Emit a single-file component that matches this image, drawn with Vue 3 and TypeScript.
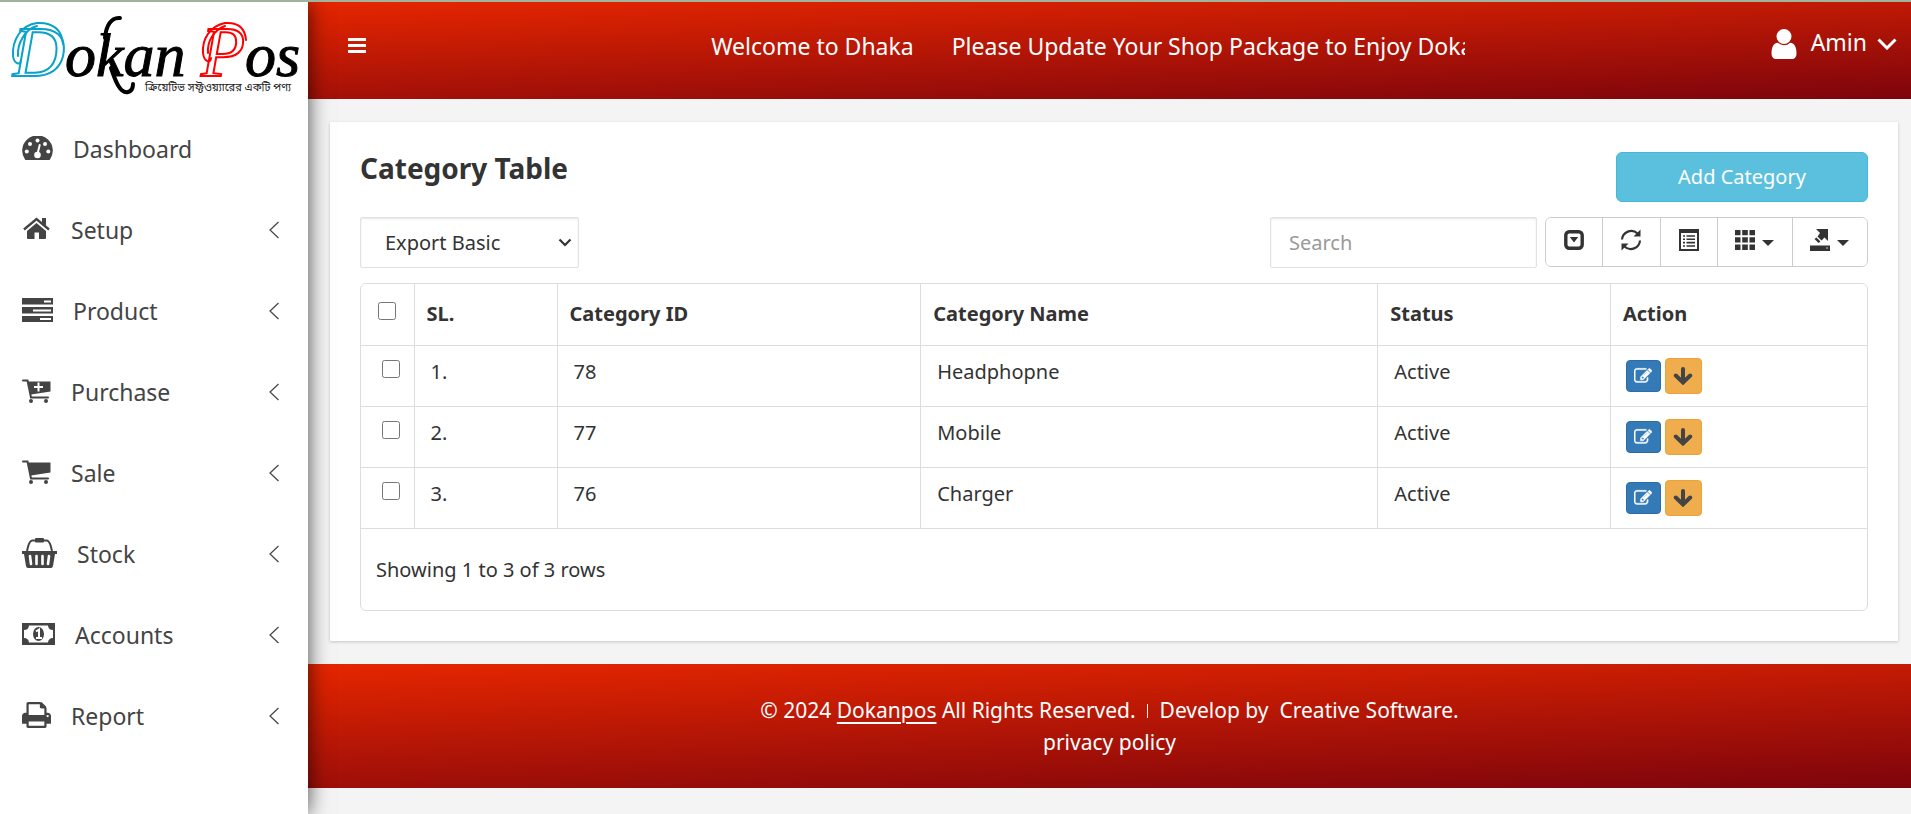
<script setup lang="ts">
import { ref } from 'vue'

interface MenuItem {
  label: string
  icon: string
  width: number
  height: number
  expandable: boolean
}

interface Category {
  id: number
  name: string
  status: string
}

const menu: MenuItem[] = [
  { label: 'Dashboard', icon: 'gauge', width: 31, height: 24, expandable: false },
  { label: 'Setup', icon: 'home', width: 29, height: 24, expandable: true },
  { label: 'Product', icon: 'tasks', width: 31, height: 24, expandable: true },
  { label: 'Purchase', icon: 'cart-plus', width: 29, height: 24, expandable: true },
  { label: 'Sale', icon: 'cart', width: 29, height: 24, expandable: true },
  { label: 'Stock', icon: 'basket', width: 35, height: 30, expandable: true },
  { label: 'Accounts', icon: 'money', width: 33, height: 22, expandable: true },
  { label: 'Report', icon: 'print', width: 29, height: 26, expandable: true },
]

const rows = ref<Category[]>([
  { id: 78, name: 'Headphopne', status: 'Active' },
  { id: 77, name: 'Mobile', status: 'Active' },
  { id: 76, name: 'Charger', status: 'Active' },
])

const selected = ref<number[]>([])
const query = ref('')
const exportMode = ref('basic')

function toggleAll(event: Event) {
  const on = (event.target as HTMLInputElement).checked
  selected.value = on ? rows.value.map((r) => r.id) : []
}
</script>

<template>
  <div class="page">
    <aside class="sidebar">
      <a class="logo" href="#" aria-label="Dokan Pos">
        <svg width="308" height="100" viewBox="0 0 308 100">
          <text x="13" y="74" class="word"><tspan class="cap blue">D</tspan><tspan>okan </tspan><tspan class="cap red">P</tspan><tspan>os</tspan></text>
          <g fill="none" stroke-linecap="round">
            <path d="M37 21C21 23 12 38 13 54C14 62 21 64 21 58M37 24C25 27 17 42 18 54" stroke="#0aa2cc" stroke-width="2" />
            <path d="M37 21C53 20 62 28 63 42" stroke="#0aa2cc" stroke-width="2" />
            <path d="M225 21C210 24 202 37 203 51C204 60 211 62 211 56M225 24C214 28 207 39 208 51" stroke="#f00" stroke-width="2" />
            <path d="M225 21C238 20 245 26 246 38" stroke="#f00" stroke-width="2" />
            <path d="M105 36C106 24 111 15 120 16" stroke="#000" stroke-width="4" />
            <path d="M111 66C115 78 120 92 128 90C132 89 133 86 133 82" stroke="#000" stroke-width="4" />
          </g>
          <text x="145" y="89" class="tagline">ক্রিয়েটিভ সফ্টওয়্যারের একটি পণ্য</text>
        </svg>
      </a>
      <nav class="menu">
        <a v-for="item in menu" :key="item.label" class="menu-item" href="#">
          <svg class="menu-icon" :width="item.width" :height="item.height" :viewBox="`0 0 ${item.width} ${item.height}`">
            <template v-if="item.icon === 'gauge'">
              <path d="M3 23.5A15.3 15.3 0 1 1 28 23.5Q27.500 24 27 24H4Q3.500 24 3 23.500Z" />
              <g fill="#fff">
                <circle cx="4.800" cy="15.500" r="2" /><circle cx="8" cy="8" r="2" /><circle cx="15.500" cy="4.600" r="2" />
                <circle cx="23" cy="8" r="2" /><circle cx="26.300" cy="15.500" r="2" /><circle cx="15.500" cy="19" r="3.300" />
              </g>
              <path d="M15.500 18L17.700 9" stroke="#fff" stroke-width="2" stroke-linecap="round" />
            </template>
            <template v-else-if="item.icon === 'home'">
              <path d="M5 14L14.500 6L24 14V21Q24 22 23 22H17V15.500H12.500V22H6Q5 22 5 21Z" />
              <path d="M2 12.500L14.500 2L27 12.500" fill="none" stroke="#444" stroke-width="2.400" />
              <path d="M20 1H24V9L20 6Z" />
            </template>
            <template v-else-if="item.icon === 'tasks'">
              <path d="M0 0H31V6.500H0ZM0 9H31V15.500H0ZM0 18H31V24H0Z" />
              <path d="M22 2.500H29V4.500H22ZM11 11.500H29V13.500H11ZM18 20H29V22H18Z" fill="#fff" />
            </template>
            <template v-else-if="item.icon === 'cart' || item.icon === 'cart-plus'">
              <path d="M1 1.500H5.500L9 18.500H26" fill="none" stroke="#444" stroke-width="2" stroke-linecap="round" />
              <path d="M6 2.500H28.500V12.500L9 15.500Z" />
              <circle cx="9" cy="22" r="2" /><circle cx="24" cy="22" r="2" />
              <path v-if="item.icon === 'cart-plus'" d="M12 8H21M16.500 3.500V12.500" stroke="#fff" stroke-width="2" />
            </template>
            <template v-else-if="item.icon === 'basket'">
              <path d="M0 13H35V16H33L31 28Q30.700 30 29 30H6Q4.300 30 4 28L2 16H0Z" />
              <path d="M5 13Q7 3 10 2.500H25Q28 3 30 13" fill="none" stroke="#444" stroke-width="2" />
              <rect x="13" y="0" width="9" height="4.500" rx="1" />
              <path d="M8 18L9 26M14.500 18V26M20.500 18V26M27 18L26 26" stroke="#fff" stroke-width="2.600" stroke-linecap="round" />
            </template>
            <template v-else-if="item.icon === 'money'">
              <path fill-rule="evenodd" d="M0 0H33V22H0ZM7 2.500A5 5 0 0 1 2 7V15A5 5 0 0 1 7 19.500H26A5 5 0 0 1 31 15V7A5 5 0 0 1 26 2.500Z" />
              <ellipse cx="16.500" cy="11" rx="5.500" ry="7" />
              <path d="M14 8.500L17 6.500V15M14 15H20" fill="none" stroke="#fff" stroke-width="2" />
            </template>
            <g v-else transform="scale(.01743 .01693) translate(-64 -128)">
              <path d="M448 1536h896v-256h-896v256zm0-640h896v-384h-160q-40 0-68-28t-28-68v-160h-640v640zm1152 64q0-26-19-45t-45-19-45 19-19 45 19 45 45 19 45-19 19-45zm128 0v416q0 13-9.500 22.500t-22.500 9.500h-224v160q0 40-28 68t-68 28h-960q-40 0-68-28t-28-68v-160h-224q-13 0-22.500-9.500t-9.500-22.500v-416q0-79 56.500-135.500t135.500-56.500h64v-544q0-40 28-68t68-28h672q40 0 88 20t76 48l152 152q28 28 48 76t20 88v256h64q79 0 135.500 56.500t56.500 135.500z" />
            </g>
          </svg>
          <span class="menu-label">{{ item.label }}</span>
          <svg v-if="item.expandable" class="menu-arrow" width="10" height="18" viewBox="0 0 10 18">
            <path d="M9.500 1L1 9L9.500 17" fill="none" stroke="#444" stroke-width="1.200" />
          </svg>
        </a>
      </nav>
    </aside>

    <div class="main">
      <header class="topbar">
        <button class="toggle" type="button" aria-label="Toggle menu">
          <svg width="18" height="16" viewBox="0 0 18 16"><path d="M0 0H18V3H0ZM0 6H18V9H0ZM0 12H18V15H0Z" fill="#fff" /></svg>
        </button>
        <div class="ticker">
          <span>Welcome to Dhaka</span>
          <span>Please Update Your Shop Package to Enjoy Dokanpos</span>
        </div>
        <button class="user" type="button">
          <svg class="user-icon" width="26" height="30" viewBox="256 128 1280 1536">
            <path fill="#fff" d="M1536 1399q0 109-62.500 187t-150.500 78h-854q-88 0-150.500-78t-62.500-187q0-85 8.500-160.500t31.500-152 58.500-131 94-89 134.500-34.500q131 128 313 128t313-128q76 0 134.500 34.500t94 89 58.500 131 31.500 152 8.500 160.500zm-256-887q0 159-112.500 271.500t-271.500 112.500-271.500-112.500-112.500-271.500 112.500-271.500 271.500-112.500 271.500 112.500 112.500 271.500z" />
          </svg>
          <span class="user-name">Amin</span>
          <svg width="20" height="12" viewBox="0 0 20 12"><path d="M1.500 1.500L10 10L18.500 1.500" fill="none" stroke="#fff" stroke-width="3" /></svg>
        </button>
      </header>

      <main class="card">
        <div class="card-head">
          <h1>Category Table</h1>
          <button class="add" type="button">Add Category</button>
        </div>

        <div class="tools">
          <div class="select-box">
            <select v-model="exportMode" aria-label="Export mode">
              <option value="basic">Export Basic</option>
              <option value="all">Export All</option>
              <option value="selected">Export Selected</option>
            </select>
            <svg width="14" height="9" viewBox="0 0 14 9"><path d="M1.500 1.500L7 7L12.500 1.500" fill="none" stroke="#333" stroke-width="2.200" /></svg>
          </div>
          <input v-model="query" class="search" type="text" placeholder="Search" aria-label="Search" />
          <div class="group">
            <button type="button" aria-label="Toggle pagination">
              <svg width="20" height="20" viewBox="0 0 20 20">
                <rect x="1.800" y="1.800" width="16.400" height="16.400" rx="3.500" fill="none" stroke="#333" stroke-width="3.400" />
                <path d="M5.800 7H14.200L10 12.500Z" fill="#333" />
              </svg>
            </button>
            <button type="button" aria-label="Refresh">
              <svg width="22" height="22" viewBox="0 0 22 22">
                <g fill="none" stroke="#333" stroke-width="2.200"><path d="M2 10.500A9.200 9.200 0 0 1 17.500 4.500" /><path d="M20 11.500A9.200 9.200 0 0 1 4.500 17.500" /></g>
                <path d="M20.500 0.500V7.500H13.500ZM1.500 21.500V14.500H8.500Z" fill="#333" />
              </svg>
            </button>
            <button type="button" aria-label="Toggle view">
              <svg width="20" height="22" viewBox="0 0 20 22">
                <path fill-rule="evenodd" fill="#333" d="M0 0H20V22H0ZM2 4V20H18V4Z" />
                <path d="M4 7H6M7.500 7H16M4 10.300H6M7.500 10.300H16M4 13.600H6M7.500 13.600H16M4 17H6M7.500 17H16" stroke="#333" stroke-width="1.600" />
              </svg>
            </button>
            <button type="button" class="wide" aria-label="Columns">
              <svg width="20" height="20" viewBox="0 0 20 20">
                <path fill="#333" d="M0 0H5.500V5.300H0ZM7.200 0H12.800V5.300H7.200ZM14.500 0H20V5.300H14.500ZM0 7.300H5.500V12.600H0ZM7.200 7.300H12.800V12.600H7.200ZM14.500 7.300H20V12.600H14.500ZM0 14.600H5.500V20H0ZM7.200 14.600H12.800V20H7.200ZM14.500 14.600H20V20H14.500Z" />
              </svg>
              <i class="caret"></i>
            </button>
            <button type="button" class="wide" aria-label="Export">
              <svg width="20" height="22" viewBox="0 0 20 22">
                <path fill="#333" d="M0 16.500H20V22H0ZM6 0H18V12L14.500 8.500L11.500 11.500L7.500 7.500L10 4ZM6.500 8.500L10.500 12.500L8.500 14L4.500 10Z" />
                <circle cx="17" cy="19" r="1" fill="#999" />
              </svg>
              <i class="caret"></i>
            </button>
          </div>
        </div>

        <div class="table-box">
          <table>
            <colgroup>
              <col class="c-check" /><col class="c-sl" /><col class="c-id" /><col class="c-name" /><col class="c-status" /><col />
            </colgroup>
            <thead>
              <tr>
                <th class="check"><input type="checkbox" aria-label="Select all" :checked="selected.length === rows.length" @change="toggleAll" /></th>
                <th>SL.</th>
                <th>Category ID</th>
                <th>Category Name</th>
                <th>Status</th>
                <th>Action</th>
              </tr>
            </thead>
            <tbody>
              <tr v-for="(row, i) in rows" :key="row.id">
                <td class="check"><input v-model="selected" type="checkbox" :value="row.id" :aria-label="`Select ${row.name}`" /></td>
                <td>{{ i + 1 }}.</td>
                <td>{{ row.id }}</td>
                <td>{{ row.name }}</td>
                <td>{{ row.status }}</td>
                <td class="action">
                  <div class="actions">
                    <button class="edit" type="button" :aria-label="`Edit ${row.name}`">
                      <svg width="18" height="18" viewBox="0 0 1792 1792">
                        <path fill="#fff" stroke="#fff" stroke-width="40" d="M888 1184l116-116-152-152-116 116v56h96v96h56zm440-720q-16-16-33 1l-350 350q-17 17-1 33t33-1l350-350q17-17 1-33zm80 594v190q0 119-84.500 203.500t-203.500 84.500h-832q-119 0-203.500-84.500t-84.500-203.500v-832q0-119 84.500-203.500t203.500-84.500h832q63 0 117 25 15 7 18 23 3 17-9 29l-49 49q-14 14-32 8-23-6-45-6h-832q-66 0-113 47t-47 113v832q0 66 47 113t113 47h832q66 0 113-47t47-113v-126q0-13 9-22l64-64q15-15 35-7t20 29zm-96-738l288 288-672 672h-288v-288zm444 132l-92 92-288-288 92-92q28-28 68-28t68 28l152 152q28 28 28 68t-28 68z" />
                      </svg>
                    </button>
                    <button class="lower" type="button" :aria-label="`Deactivate ${row.name}`">
                      <svg width="20" height="18" viewBox="0 0 20 18"><path d="M10 2V14M2.800 8.500L10 15.500L17.200 8.500" fill="none" stroke="#444" stroke-width="4" stroke-linecap="round" /></svg>
                    </button>
                  </div>
                </td>
              </tr>
            </tbody>
          </table>
          <p class="summary">Showing 1 to {{ rows.length }} of {{ rows.length }} rows</p>
        </div>
      </main>

      <footer class="footer">
        <p>© 2024 <a class="brand" href="#">Dokanpos</a> All Rights Reserved. <span class="bar"></span> Develop by &nbsp;<a href="#">Creative Software.</a></p>
        <p><a href="#">privacy policy</a></p>
      </footer>
    </div>
  </div>
</template>

<style>
body {
  margin: 0;
  background: #f4f4f4;
}
</style>

<style scoped>
.page {
  box-sizing: border-box;
  display: flex;
  min-height: 100vh;
  border-top: 2px solid #9fb39f;
  font-family: "Noto Sans", "Open Sans", sans-serif;
  font-size: 20px;
  line-height: 28px;
  color: #333;
}
button,
input,
select {
  font: inherit;
  color: inherit;
  margin: 0;
}
button {
  cursor: pointer;
}
a {
  color: inherit;
  text-decoration: none;
}
.sidebar {
  position: relative;
  z-index: 2;
  flex: 0 0 308px;
  background: #fff;
  box-shadow: 0 0 20px rgba(0, 0, 0, 0.7);
  clip-path: inset(0 -30px 0 0);
}
.logo {
  display: block;
  height: 106px;
}
.logo svg {
  display: block;
}
.word {
  font-family: "Liberation Serif", serif;
  font-style: italic;
  font-size: 62px;
  fill: #000;
  stroke: #000;
  stroke-width: 1px;
}
.cap {
  font-size: 72px;
  fill: #fff;
  stroke-width: 2px;
}
.blue {
  stroke: #0aa2cc;
}
.red {
  stroke: #f00;
}
.tagline {
  font-size: 11px;
  font-family: "Noto Sans Bengali", "Noto Sans", sans-serif;
  fill: #222;
}
.menu-item {
  display: flex;
  align-items: center;
  height: 81px;
  padding: 0 29px 0 22px;
  font-size: 23px;
  color: #444;
}
.menu-icon {
  margin-right: 20px;
  margin-bottom: 2px;
  fill: #444;
}
.menu-label {
  flex: 1;
}
.main {
  flex: 1;
  min-width: 0;
}
.topbar,
.footer {
  background: linear-gradient(178deg, #e62600, #7d040c);
  color: #fff;
}
.topbar {
  display: grid;
  grid-template-columns: 25.15% 47% 1fr;
  height: 97px;
}
.toggle,
.user {
  border: 0;
  background: none;
}
.toggle {
  justify-self: start;
  align-self: center;
  display: flex;
  margin-left: 34px;
  margin-bottom: 10px;
}
.ticker {
  display: flex;
  gap: 38px;
  align-items: center;
  overflow: hidden;
  white-space: nowrap;
  font-size: 23px;
  padding-bottom: 10px;
}
.user {
  justify-self: end;
  display: flex;
  align-items: center;
  gap: 10px;
  padding: 0 14px 14px 0;
  font-size: 23px;
}
.user-icon {
  margin-right: 4px;
}
.user-name {
  padding-bottom: 4px;
}
.card {
  margin: 23px 13px 23px 22px;
  padding: 30px;
  background: #fff;
  box-shadow: 0 1px 3px rgba(0, 0, 0, 0.2);
}
.card-head {
  display: flex;
  justify-content: space-between;
}
h1 {
  margin: 0;
  font-size: 28px;
  line-height: 32px;
  font-weight: 700;
}
.add {
  width: 252px;
  height: 50px;
  padding: 0;
  border: 1px solid #46b8da;
  border-radius: 6px;
  background: #5bc0de;
  color: #fff;
}
.tools {
  display: flex;
  margin: 15px 0;
}
.select-box {
  display: flex;
  align-items: center;
  width: 219px;
  margin-right: auto;
}
.select-box select,
.search {
  box-sizing: border-box;
  height: 51px;
  border: 1px solid #e2e2e2;
  border-radius: 2px;
  background: #fff;
  box-shadow: inset 0 1px 2px rgba(0, 0, 0, 0.1);
}
.select-box select {
  appearance: none;
  width: 100%;
  padding: 0 24px;
}
.select-box svg {
  flex: none;
  margin-left: -21px;
  pointer-events: none;
}
.search {
  width: 267px;
  padding: 0 18px;
}
.search::placeholder {
  color: #999;
  opacity: 1;
}
.group {
  box-sizing: border-box;
  display: flex;
  width: 323px;
  height: 50px;
  margin-left: 8px;
  border: 1px solid #ccc;
  border-radius: 6px;
  overflow: hidden;
}
.group button {
  flex: 57;
  display: flex;
  align-items: center;
  justify-content: center;
  gap: 7px;
  padding: 0 0 4px;
  border: 0;
  background: #fff;
}
.group .wide {
  flex: 75;
}
.group button + button {
  border-left: 1px solid #ccc;
}
.caret {
  margin-top: 5px;
  border: 6px solid transparent;
  border-top-color: #333;
  border-bottom: 0;
}
.table-box {
  border: 1px solid #ddd;
  border-radius: 6px;
}
table {
  width: 100%;
  table-layout: fixed;
  border-collapse: collapse;
}
.c-check {
  width: 53px;
}
.c-sl {
  width: 143px;
}
.c-id {
  width: 24.150%;
}
.c-name {
  width: 30.350%;
}
.c-status {
  width: 15.450%;
}
th,
td {
  box-sizing: border-box;
  height: 61px;
  border-bottom: 1px solid #ddd;
  border-left: 1px solid #ddd;
  text-align: left;
}
th:first-child,
td:first-child {
  border-left: 0;
}
th {
  padding: 0 12px;
}
td {
  padding: 12px 16px;
  vertical-align: top;
}
.check {
  padding: 14px 8px 0 21px;
  vertical-align: top;
  line-height: 0;
}
th.check {
  padding: 18px 12px 0 17px;
}
.check input {
  width: 18px;
  height: 18px;
}
td.action {
  padding: 12px 15px;
}
.actions {
  display: flex;
  align-items: center;
  gap: 4px;
}
.actions button {
  display: flex;
  align-items: center;
  justify-content: center;
  padding: 0;
  border-radius: 4px;
}
.actions .edit {
  width: 35px;
  height: 32px;
  border: 1px solid #2e6da4;
  background: #337ab7;
}
.actions .lower {
  width: 37px;
  height: 36px;
  border: 1px solid #eea236;
  background: #f0ad4e;
}
.summary {
  margin: 0;
  padding: 27px 15px 26px;
}
.footer {
  box-sizing: border-box;
  min-height: 124px;
  padding: 30px 20px;
  text-align: center;
  font-size: 21px;
  line-height: 32px;
}
.footer p {
  margin: 0;
}
.brand {
  text-decoration: underline;
  text-underline-offset: 4px;
  text-decoration-thickness: 2px;
}
.bar {
  display: inline-block;
  width: 1px;
  height: 14px;
  margin: 0 6px;
  background: #fff;
}
</style>
